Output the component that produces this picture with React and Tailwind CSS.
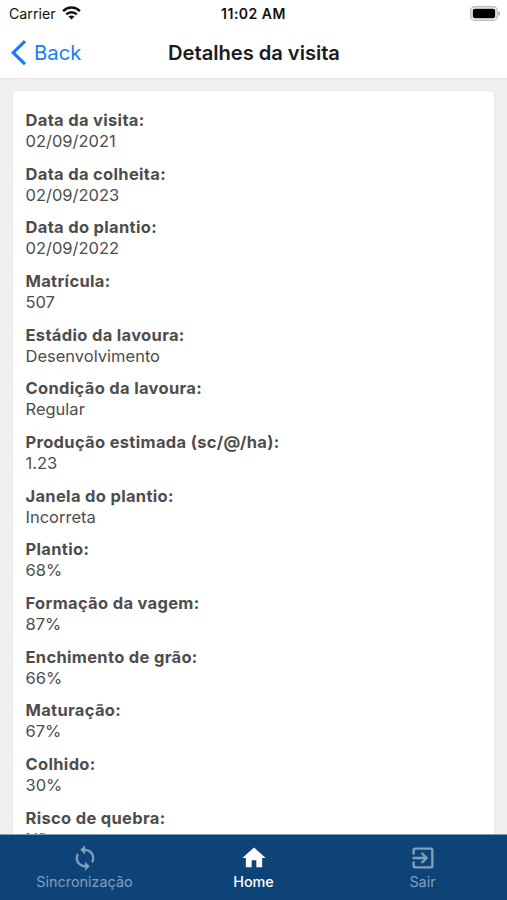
import { MdSync, MdHome, MdExitToApp } from "react-icons/md";

const details = [
    { label: 'Data da visita', value: '02/09/2021' },
    { label: 'Data da colheita', value: '02/09/2023' },
    { label: 'Data do plantio', value: '02/09/2022' },
    { label: 'Matrícula', value: '507' },
    { label: 'Estádio da lavoura', value: 'Desenvolvimento' },
    { label: 'Condição da lavoura', value: 'Regular' },
    { label: 'Produção estimada (sc/@/ha)', value: '1.23' },
    { label: 'Janela do plantio', value: 'Incorreta' },
    { label: 'Plantio', value: '68%' },
    { label: 'Formação da vagem', value: '87%' },
    { label: 'Enchimento de grão', value: '66%' },
    { label: 'Maturação', value: '67%' },
    { label: 'Colhido', value: '30%' },
    { label: 'Risco de quebra', value: 'Não' },
];

function StatusBar() {
    return (
        <div className="grid grid-cols-3 items-center h-[27px] pl-[9px] pr-[6px] text-[#111]">
            <div className="flex items-center gap-[6px]">
                <span className="text-[14.2px]">Carrier</span>
                <svg width="19" height="14" viewBox="0 0 19 14" fill="none" stroke="currentColor" strokeWidth="2.5">
                    <path d="M1.1 5.1C5.9 0.4 13.1 0.4 17.9 5.1" />
                    <path d="M4.2 8.3C7.2 5.4 11.8 5.4 14.8 8.3" />
                    <path d="M9.5 13.6L6.5 10.6C8.2 9 10.8 9 12.5 10.6Z" fill="currentColor" stroke="none" />
                </svg>
            </div>
            <span className="-ml-[3px] text-center text-[14px] font-semibold tracking-[0.5px]">11:02 AM</span>
            <svg className="justify-self-end" width="31" height="15" viewBox="0 0 31 15">
                <rect x="0.8" y="0.8" width="26.4" height="13.4" rx="3.8" fill="#fff" stroke="#bdbdbd" strokeWidth="1.4" />
                <rect x="2.8" y="2.8" width="22.4" height="9.4" rx="2" fill="#000" />
                <path d="M28.4 5.2C30.8 6 30.8 9 28.4 9.8Z" fill="#aaa" />
            </svg>
        </div>
    )
}

function Header() {
    return (
        <div className="grid grid-cols-[120px_1fr_120px] items-center h-[51px]">
            <button className="flex items-center gap-[7px] pl-[10px] text-[#157efb]">
                <svg width="17" height="26" viewBox="0 0 17 26" fill="none" stroke="currentColor" strokeWidth="3.2">
                    <path d="M15 1.2L3.2 12.7L15 24.2" />
                </svg>
                <span className="pt-[2px] text-[20.3px]">Back</span>
            </button>
            <h1 className="pt-px pl-px text-center text-[20.2px] font-semibold tracking-[-0.05px] text-[#1c1c1e]">Detalhes da visita</h1>
        </div>
    )
}

function Tab({ icon: Icon, title, active }) {
    return (
        <button className={`flex flex-1 flex-col items-center pt-[9px] ${active ? 'text-white' : 'text-[#809fbd]'}`}>
            <Icon size={28} />
            <span className={`text-[14.4px] leading-[20px] ${active ? 'font-medium' : ''}`}>{title}</span>
        </button>
    )
}

export default function App() {
    return (
        <div className="flex h-[900px] w-[507px] flex-col overflow-hidden bg-white font-['Inter',sans-serif]">
            <StatusBar />
            <Header />

            <div className="min-h-0 flex-1 overflow-hidden border-t border-[#e8e8e8] bg-[#f0f0f0] px-[12px] pt-[11px]">
                <div className="rounded-[5px] border border-[#e8e8e8] bg-white px-[12.5px] pt-[19px] pb-5">
                    {details.map((item) => (
                        <div key={item.label} className="mb-[11.68px] text-[16.5px] leading-[21px] text-[#4d4d4d]">
                            <p className="font-bold tracking-[0.32px]">{item.label}:</p>
                            <p>{item.value}</p>
                        </div>
                    ))}
                </div>
            </div>

            <div className="flex h-[66px] shrink-0 border-t border-[#7f9cb9] bg-[#0e4377]">
                <Tab icon={MdSync} title="Sincronização" />
                <Tab icon={MdHome} title="Home" active />
                <Tab icon={MdExitToApp} title="Sair" />
            </div>
        </div>
    )
}
